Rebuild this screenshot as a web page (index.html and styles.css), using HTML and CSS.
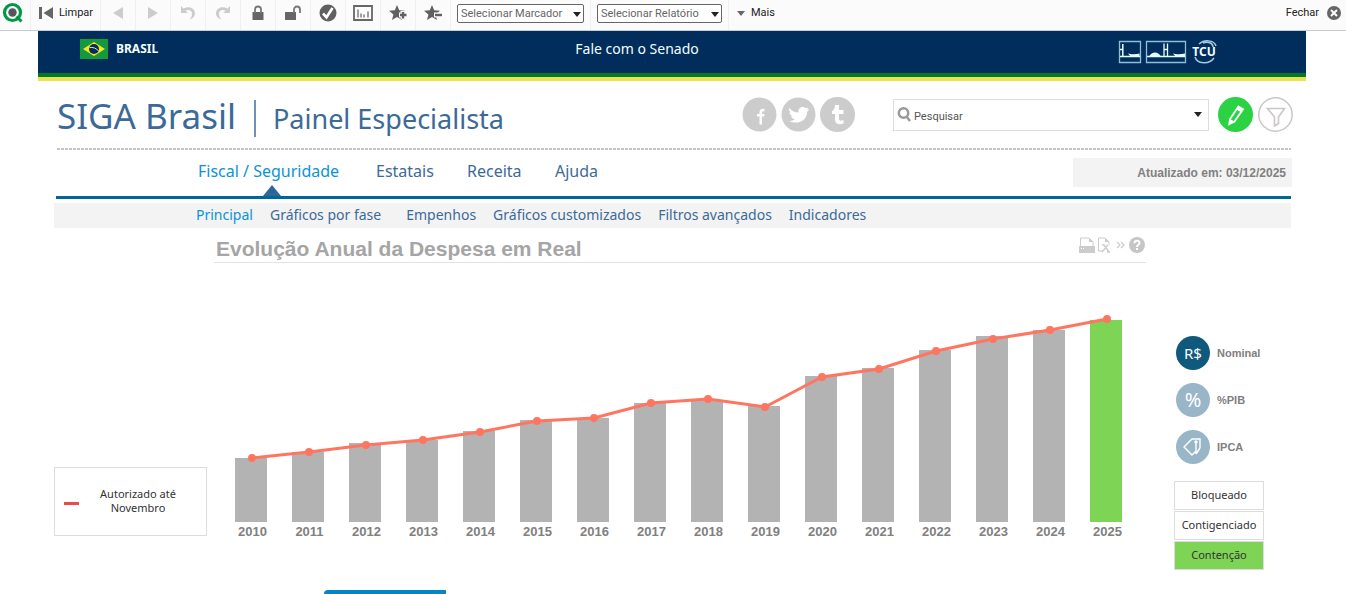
FILE: index.html
```html
<!DOCTYPE html>
<html lang="pt-BR">
<head>
<meta charset="utf-8">
<title>SIGA Brasil</title>
<link rel="stylesheet" href="styles.css">
</head>
<body>
<div class="toolbar">
  <span class="tool logo"><svg width="22" height="22" viewBox="0 0 22 22"><circle cx="10.500" cy="10.500" r="8" fill="none" stroke="#009845" stroke-width="3.200"/><path d="M14.500 14.500l5 5" stroke="#009845" stroke-width="3"/><circle cx="10.500" cy="10.500" r="4.200" fill="#54565a"/></svg></span>
  <button class="tool clear"><svg width="15" height="14" viewBox="0 0 15 14" fill="#666"><path d="M1 1h3v12H1zM15 1v12L5.500 7z"/></svg>Limpar</button>
  <button class="tool" aria-label="Voltar"><svg width="12" height="14" viewBox="0 0 12 14"><path d="M11 1v12L1 7z" fill="#ccc"/></svg></button>
  <button class="tool" aria-label="Avançar"><svg width="12" height="14" viewBox="0 0 12 14"><path d="M1 1v12l10-6z" fill="#ccc"/></svg></button>
  <button class="tool" aria-label="Desfazer"><svg width="18" height="16" viewBox="0 0 18 16"><path d="M2 1v7h7L6.500 5.700C10 4 13 5.500 13 9c0 2-1 4-2.500 5.500C14 13.500 16 11.500 16 8.500 16 3 10 .5 4.500 3.600z" fill="#ccc"/></svg></button>
  <button class="tool" aria-label="Refazer"><svg width="18" height="16" viewBox="0 0 18 16"><path d="M16 1v7H9l2.500-2.300C8 4 5 5.500 5 9c0 2 1 4 2.500 5.500C4 13.500 2 11.500 2 8.500 2 3 8 .5 13.500 3.600z" fill="#ccc"/></svg></button>
  <button class="tool" aria-label="Bloquear"><svg width="14" height="16" viewBox="0 0 14 16"><rect x="1.500" y="7" width="11" height="8" fill="#666"/><path d="M4 8V4.500a3 3 0 0 1 6 0V8" fill="none" stroke="#777" stroke-width="1.800"/></svg></button>
  <button class="tool" aria-label="Desbloquear"><svg width="18" height="16" viewBox="0 0 18 16"><rect x="1" y="7" width="11" height="8" fill="#666"/><path d="M10 8V4.500a3 3 0 0 1 6 0V8" fill="none" stroke="#777" stroke-width="1.800"/></svg></button>
  <button class="tool" aria-label="Seleções atuais"><svg width="18" height="18" viewBox="0 0 18 18"><circle cx="9" cy="9" r="8.500" fill="#606060"/><path d="M4 9.500l3.500 3.800L13.500 4" fill="none" stroke="#fff" stroke-width="2.600"/></svg></button>
  <button class="tool" aria-label="Gráfico rápido"><svg width="20" height="18" viewBox="0 0 20 18" fill="none" stroke="#666"><path d="M1 2h18v14H1z" stroke-width="1.800"/><path d="M5 5.500v8M8 9.500v4M11 10.500v3M15 7.500v6" stroke="#888" stroke-width="1.600"/></svg></button>
  <button class="tool" aria-label="Adicionar marcador"><svg width="20" height="18" viewBox="0 0 20 18"><path d="M9 1l2.200 5.300 5.800.4-4.400 3.700 1.400 5.600-5-3-5 3 1.400-5.600L1 6.700l5.800-.4z" fill="#606060"/><path d="M11 11h8M15 7v8" stroke="#fafafa" stroke-width="5"/><path d="M12 11h6.500M15 8v6.500" stroke="#606060" stroke-width="2.400"/></svg></button>
  <button class="tool" aria-label="Remover marcador"><svg width="20" height="18" viewBox="0 0 20 18"><path d="M9 1l2.200 5.300 5.800.4-4.400 3.700 1.400 5.600-5-3-5 3 1.400-5.600L1 6.700l5.800-.4z" fill="#606060"/><path d="M11 11h8" stroke="#fafafa" stroke-width="5"/><path d="M12 11h7" stroke="#606060" stroke-width="2.400"/></svg></button>
  <span class="tool picker"><span class="select bookmark"><select aria-label="Marcador"><option>Selecionar Marcador</option></select></span></span>
  <span class="tool picker"><span class="select"><select aria-label="Relatório"><option>Selecionar Relatório</option></select></span></span>
  <button class="more"><svg width="8" height="5" viewBox="0 0 8 5"><path d="M0 0h8L4 5z" fill="#666"/></svg>Mais</button>
  <button class="close">Fechar<svg width="14" height="14" viewBox="0 0 14 14"><circle cx="7" cy="7" r="7" fill="#666"/><path d="M4 4l6 6M10 4l-6 6" stroke="#fff" stroke-width="2"/></svg></button>
</div>

<div class="page">
  <div class="banner">
    <a class="country" href="#"><svg width="28" height="20" viewBox="0 0 28 20"><path d="M0 0h28v20H0z" fill="#129a3c"/><path d="M14 3l11 7-11 7-11-7z" fill="#f4e62a"/><circle cx="14" cy="10" r="5" fill="#0b2c50"/><path d="M9.500 8.500c3-.5 7 .5 9 3.500" fill="none" stroke="#c8e8e8"/></svg>BRASIL</a>
    <a class="contact" href="#">Fale com o Senado</a>
    <div class="houses">
      <svg width="24" height="24" viewBox="0 0 24 24"><path d="M1.500 1.500h21v21h-21z" fill="none" stroke="#8fbfd2" stroke-width="1.300"/><path d="M2 16.500h20M4.800 4v12M2 9.500h3" stroke="#e4ffff" stroke-width="1.500" fill="none"/><path d="M10 13.500c3 1 8 1 11.500 0V17H13z" fill="#e4ffff"/></svg>
      <svg width="42" height="24" viewBox="0 0 42 24"><path d="M1.500 1.500h39v21h-39z" fill="none" stroke="#8fbfd2" stroke-width="1.300"/><path d="M2 16.500h38M19 3.500V16M22.500 3.500V16M19 9.500h3.500" stroke="#e4ffff" stroke-width="1.300" fill="none"/><path d="M4 16.500c3-5.500 9-5.500 12 0zM28 13.500c3 1 8 1 12 0V17h-9z" fill="#e4ffff"/></svg>
      <svg width="30" height="26" viewBox="0 0 30 26"><path d="M9 5C14 .5 24 .5 26 7M5 18c2 7 14 8 19 1M13 4c5-2 10 0 10 4" fill="none" stroke="#9fc9dc" stroke-width="1.500"/><text class="tcu" x="14" y="17" text-anchor="middle">TCU</text></svg>
    </div>
  </div>

  <div class="content">
    <header class="header">
      <h1 class="brand">SIGA Brasil<span class="brand-panel">Painel Especialista</span></h1>
      <div class="social">
        <a href="#" aria-label="Facebook"><svg width="35" height="35" viewBox="0 0 35 35"><circle cx="17.500" cy="17.500" r="17" fill="#ccc"/><path d="M17.500 27.500v-8H15V17h2.500v-1.500c0-3 2-4.200 5-3.500v2.200c-2.200-.3-2.500.3-2.500 2.800h2.500l-.3 2.500H20v8z" fill="#fff"/></svg></a>
        <a href="#" aria-label="Twitter"><svg width="35" height="35" viewBox="0 0 35 35"><circle cx="17.500" cy="17.500" r="17" fill="#ccc"/><path d="M8 11c3 3 6 4.500 9.500 4.500-.8-5 4.500-7 7.500-4.200l2.500-.8-1.500 2.300 2.500-.5-2.500 2.700c0 8-8 13.500-18 9 2.500 0 4.500-.6 5.800-1.800-2-.2-3.300-1.400-3.800-2.900l1.800-.1C9.500 18.500 8.500 17 8.500 15l1.600.4C8 14 7.500 12.500 8 11z" fill="#fff"/></svg></a>
        <a href="#" aria-label="Tumblr"><svg width="35" height="35" viewBox="0 0 35 35"><circle cx="17.500" cy="17.500" r="17.500" fill="#ccc"/><path d="M15 8h4v5h4.500v4H19v5c0 2 2 2 4.500 1v3.500c-5 1.800-8.500 0-8.500-4V17h-3v-3c2-.7 3-3 3-6z" fill="#fff"/></svg></a>
      </div>
      <label class="search">
        <svg width="14" height="15" viewBox="0 0 14 15" fill="none" stroke="#999" stroke-width="2.500"><circle cx="6.500" cy="6" r="4.700"/><path d="M9.500 9.500L13 14"/></svg>
        <input type="text" placeholder="Pesquisar" aria-label="Pesquisar">
        <svg width="8" height="5" viewBox="0 0 8 5"><path d="M0 0h8L4 5z" fill="#222"/></svg>
      </label>
      <div class="actions">
        <button aria-label="Editar"><svg width="35" height="35" viewBox="0 0 35 35"><circle cx="17.500" cy="17.500" r="17.500" fill="#2bd244"/><path d="M20.500 9.500l4.500 2.800-8.500 12.200-5.300 2.700.8-5.200z" fill="none" stroke="#fff" stroke-width="1.800"/><path d="M20.500 9.500l4.500 2.800-2 3-4.500-2.800zM12 22l4.500 2.500-5.300 2.700z" fill="#fff"/></svg></button>
        <button aria-label="Filtrar"><svg width="35" height="35" viewBox="0 0 35 35" fill="none" stroke="#ccc7c7"><circle cx="17.500" cy="17.500" r="16.700" stroke-width="1.500"/><path d="M9.500 11.500h17L20.500 20v6.500L16.500 29v-9z" stroke-width="1.600"/></svg></button>
      </div>
    </header>

    <nav class="menu">
      <a class="on" href="#">Fiscal / Seguridade</a>
      <a href="#">Estatais</a>
      <a href="#">Receita</a>
      <a href="#">Ajuda</a>
      <span class="updated">Atualizado em: 03/12/2025</span>
    </nav>
    <nav class="submenu">
      <a class="on" href="#">Principal</a>
      <a href="#">Gráficos por fase</a>
      <a href="#">Empenhos</a>
      <a href="#">Gráficos customizados</a>
      <a href="#">Filtros avançados</a>
      <a href="#">Indicadores</a>
    </nav>

    <main class="board">
      <div class="legend"><span class="legend-mark"></span><span class="legend-text">Autorizado até Novembro</span></div>
      <section class="panel">
        <div class="panel-head">
          <h2>Evolução Anual da Despesa em Real</h2>
          <div class="panel-tools">
            <button aria-label="Imprimir"><svg width="16" height="16" viewBox="0 0 16 16"><path d="M1.500 9V1H10l4 4v4" fill="none" stroke="#ccc"/><path d="M10 1v4h4zM0 9h16v7H0z" fill="#ccc"/><path d="M2 11.500h1M4 11.500h1" stroke="#fff"/></svg></button>
            <button aria-label="Exportar"><svg width="14" height="16" viewBox="0 0 14 16"><path d="M5 14H1.500V1H8l4 4v3" fill="none" stroke="#ccc"/><path d="M8 1v4h4z" fill="#ccc"/><path d="M5 8h2l5 7M11 8l-6 7M10 15h3" fill="none" stroke="#ccc" stroke-width="1.500"/></svg></button>
            <button aria-label="Expandir"><svg width="14" height="16" viewBox="0 0 14 16" fill="none" stroke="#ccc" stroke-width="1.300"><path d="M4 5l3 3-3 3M8 5l3 3-3 3"/></svg></button>
            <button aria-label="Ajuda"><svg width="16" height="16" viewBox="0 0 16 16"><circle cx="8" cy="8" r="8" fill="#c6c6c6"/><path d="M5.500 6.200C5.500 3 10.500 3 10.500 6c0 1.800-2.500 1.800-2.500 4" fill="none" stroke="#fff" stroke-width="2"/><path d="M7 11h2v2H7z" fill="#fff"/></svg></button>
          </div>
        </div>
        <div class="chart">
          <div class="bars">
            <div class="bar" style="height:64px"></div><div class="bar" style="height:70px"></div><div class="bar" style="height:79px"></div><div class="bar" style="height:82px"></div>
            <div class="bar" style="height:91px"></div><div class="bar" style="height:102px"></div><div class="bar" style="height:104px"></div><div class="bar" style="height:119px"></div>
            <div class="bar" style="height:122px"></div><div class="bar" style="height:116px"></div><div class="bar" style="height:146px"></div><div class="bar" style="height:154px"></div>
            <div class="bar" style="height:172px"></div><div class="bar" style="height:186px"></div><div class="bar" style="height:192px"></div><div class="bar current" style="height:202px"></div>
          </div>
          <svg class="trend" viewBox="0 0 912 220" preserveAspectRatio="none">
            <polyline class="trend-line" points="28,156 85,150 142,143 199,138 256,130 313,119 370,116 427,101 484,97 541,105 598,75 655,67 712,49 769,37 826,28 883,17"/>
            <path class="trend-dots" d="M28 156h0M85 150h0M142 143h0M199 138h0M256 130h0M313 119h0M370 116h0M427 101h0M484 97h0M541 105h0M598 75h0M655 67h0M712 49h0M769 37h0M826 28h0M883 17h0"/>
          </svg>
          <div class="years"><span>2010</span><span>2011</span><span>2012</span><span>2013</span><span>2014</span><span>2015</span><span>2016</span><span>2017</span><span>2018</span><span>2019</span><span>2020</span><span>2021</span><span>2022</span><span>2023</span><span>2024</span><span>2025</span></div>
        </div>
        <div class="tab"></div>
      </section>
      <aside class="side">
        <button class="measure selected"><span class="disc">R$</span>Nominal</button>
        <button class="measure"><span class="disc percent">%</span>%PIB</button>
        <button class="measure"><span class="disc"><svg width="20" height="20" viewBox="0 0 20 20" fill="none" stroke="#fff" stroke-width="1.400"><path d="M17 11V2H9L1 10l8 8 4-4M13 6v11M13 17l4-6"/><circle cx="13" cy="5" r="1"/></svg></span>IPCA</button>
        <div class="filters">
          <button>Bloqueado</button>
          <button>Contigenciado</button>
          <button class="held">Contenção</button>
        </div>
      </aside>
    </main>
  </div>
</div>
</body>
</html>
```
FILE: styles.css
```css
* { box-sizing: border-box; }
body { margin: 0; background: #fff; color: #333; font-family: "Noto Sans", sans-serif; }
button { margin: 0; padding: 0; border: 0; background: none; color: inherit; font: inherit; cursor: pointer; }
a { color: inherit; text-decoration: none; }
svg { display: block; flex: none; }

.toolbar { display: flex; align-items: stretch; height: 31px; background: #fbfbfb; border-bottom: 1px solid #c5cdd3; color: #222; font: 11px/14px Roboto, sans-serif; }
.tool { display: flex; align-items: center; justify-content: center; width: 35px; padding-bottom: 4px; border-right: 1px solid #f0f0f0; }
.logo { width: 31px; padding: 0 4px 4px 0; }
.clear { gap: 6px; width: 70px; }
.picker { width: auto; padding: 0 6px 4px; }
.select { position: relative; }
.select::after { content: ""; position: absolute; right: 3px; top: 8px; border: 4px solid transparent; border-top: 5px solid #222; border-bottom: 0; pointer-events: none; }
.select select { display: block; width: 125px; height: 19px; padding: 0 3px; border: 1px solid #666; border-radius: 2px; background: #fff; color: #666; appearance: none; font: 11px/17px Roboto, sans-serif; }
.bookmark select { width: 127px; }
.more, .close { display: flex; align-items: center; gap: 6px; padding-bottom: 4px; }
.more { margin-left: 8px; }
.close { margin-left: auto; margin-right: 5px; gap: 8px; }

.page { margin: 0 40px 0 38px; }
.banner { display: grid; grid-template-columns: 1fr auto 1fr; align-items: start; height: 50px; padding: 8px 86px 0 42px; background: linear-gradient(#002d5c 42px, #007a2c 42px, #007a2c 46px, #f0e050 46px); color: #f2ffff; }
.country { display: flex; align-items: center; gap: 8px; font-size: 12px; font-weight: 700; line-height: 20px; }
.contact { margin-right: 26px; font-size: 14px; line-height: 20px; }
.houses { display: flex; align-items: center; justify-content: flex-end; gap: 3px; }
.tcu { fill: #f2ffff; font: bold 12px "Noto Sans", sans-serif; }

.content { padding: 0 14px 0 16px; }
.header { display: flex; align-items: center; height: 69px; margin: 0 1px 0 3px; padding-bottom: 2px; background: repeating-linear-gradient(90deg, #c4c4c4 0 3px, #fff 3px 4px) bottom / 100% 2px no-repeat; }
.brand { margin: 0 auto 0 0; padding-top: 2px; color: #3c6a98; font-size: 35px; font-weight: 400; line-height: 48px; white-space: nowrap; }
.brand-panel { margin-left: 18px; padding-left: 17px; border-left: 2px solid #6d92b4; font-size: 27px; line-height: 32px; }
.social { display: flex; gap: 4px; }
.search { display: flex; align-items: center; width: 316px; height: 32px; margin: 0 9px 0 38px; padding: 0 6px 0 3px; border: 1px solid #ddd; }
.search input { flex: 1; min-width: 0; padding: 4px 3px 0; border: 0; outline: 0; background: none; font: 11px/16px Roboto, sans-serif; }
.search input::placeholder { color: #555; opacity: 1; }
.actions { display: flex; gap: 5px; margin-right: -2px; }

.menu { display: grid; grid-template-columns: 178px 91px 88px 1fr 218px; align-items: start; height: 49px; margin: 0 1px 0 2px; padding: 8px 0 0 142px; border-bottom: 3px solid #00679a; color: #3c6a98; font-size: 16px; line-height: 26px; white-space: nowrap; }
.menu .on { color: #0b93d8; position: relative; }
.menu .on::after { content: ""; position: absolute; left: 65px; bottom: -12px; border: 9px solid transparent; border-bottom: 11px solid #2b6898; border-top: 0; }
.updated { margin-right: -1px; padding: 1px 6px 0; background: #f3f3f3; color: #808080; font: bold 12px/28px "Liberation Sans", sans-serif; text-align: right; }
.submenu { display: flex; gap: 17px; margin: 4px 1px 0 0; padding: 0 0 2px 142px; background: #f3f3f3; color: #3c6a98; font-size: 14px; line-height: 23px; white-space: nowrap; }
.submenu a:nth-child(3) { padding-left: 8px; }
.submenu .on { color: #0b93d8; }

.board { display: grid; grid-template-columns: 160px 1fr 118px; }
.legend { display: flex; align-items: center; align-self: start; width: 153px; height: 69px; margin-top: 239px; padding: 0 9px; border: 1px solid #ddd; }
.legend-mark { width: 15px; height: 3px; margin-top: 3px; background: #e84c4c; }
.legend-text { flex: 1; padding: 0 12px 2px; font-size: 11px; line-height: 14px; text-align: center; }
.panel { margin-right: 28px; }
.panel-head { display: flex; align-items: center; justify-content: space-between; height: 35px; border-bottom: 1px solid #e2e2e2; }
.panel-head h2 { margin: 8px 0 0 2px; color: #a5a5a5; font: bold 21px/26px "Liberation Sans", sans-serif; }
.panel-tools { display: flex; gap: 2px; margin-right: 1px; }
.chart { position: relative; margin: 39px 10px 0; }
.bars, .years { display: grid; grid-template-columns: repeat(16, 1fr); }
.bars { align-items: end; height: 220px; }
.bar { width: 32px; margin-left: 11px; background: #b3b3b3; }
.current { background: #7ed455; }
.trend { position: absolute; left: 0; top: 0; width: 100%; height: 220px; fill: none; stroke: #ff7560; }
.trend-line { stroke-width: 3px; vector-effect: non-scaling-stroke; }
.trend-dots { stroke-width: 8px; stroke-linecap: round; vector-effect: non-scaling-stroke; }
.years { color: #808080; font: bold 13px/20px "Liberation Sans", sans-serif; text-align: center; }
.tab { width: 122px; height: 4px; margin: 48px 0 0 110px; border-top-left-radius: 4px; background: #0087c8; }

.side { padding-top: 108px; }
.measure { display: flex; align-items: center; gap: 7px; margin: 0 0 13px 2px; color: #808080; font: bold 11px/14px "Liberation Sans", sans-serif; }
.disc { display: flex; align-items: center; justify-content: center; width: 34px; height: 34px; border-radius: 50%; background: #98b6c7; color: #fff; font: 15px/20px "Noto Sans", sans-serif; }
.percent { font-size: 20px; }
.selected .disc { background: #0f5a7c; }
.filters { display: grid; gap: 1px; width: 90px; margin-top: 17px; }
.filters button { height: 29px; padding-bottom: 2px; border: 1px solid #ddd; font-size: 11px; line-height: 14px; }
.filters .held { background: #7ed455; }
```
